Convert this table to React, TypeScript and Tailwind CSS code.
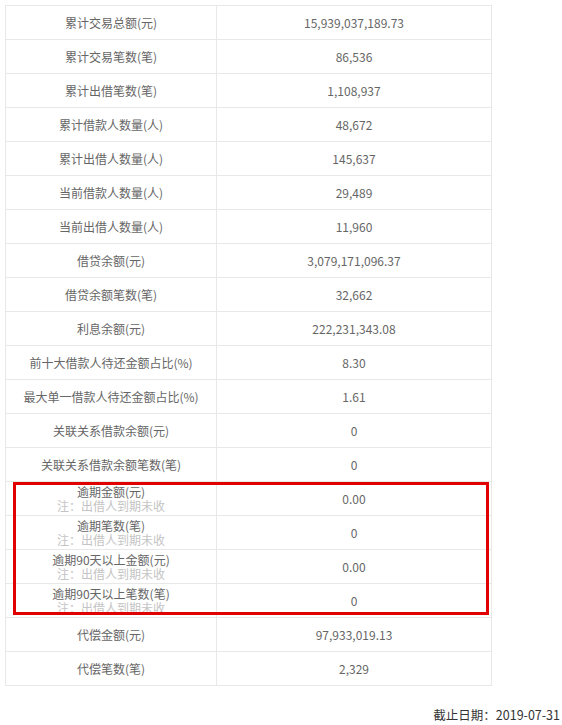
const rows: { label: string; value: string; note?: boolean }[] = [
  { label: '累计交易总额(元)', value: '15,939,037,189.73' },
  { label: '累计交易笔数(笔)', value: '86,536' },
  { label: '累计出借笔数(笔)', value: '1,108,937' },
  { label: '累计借款人数量(人)', value: '48,672' },
  { label: '累计出借人数量(人)', value: '145,637' },
  { label: '当前借款人数量(人)', value: '29,489' },
  { label: '当前出借人数量(人)', value: '11,960' },
  { label: '借贷余额(元)', value: '3,079,171,096.37' },
  { label: '借贷余额笔数(笔)', value: '32,662' },
  { label: '利息余额(元)', value: '222,231,343.08' },
  { label: '前十大借款人待还金额占比(%)', value: '8.30' },
  { label: '最大单一借款人待还金额占比(%)', value: '1.61' },
  { label: '关联关系借款余额(元)', value: '0' },
  { label: '关联关系借款余额笔数(笔)', value: '0' },
  { label: '逾期金额(元)', value: '0.00', note: true },
  { label: '逾期笔数(笔)', value: '0', note: true },
  { label: '逾期90天以上金额(元)', value: '0.00', note: true },
  { label: '逾期90天以上笔数(笔)', value: '0', note: true },
  { label: '代偿金额(元)', value: '97,933,019.13' },
  { label: '代偿笔数(笔)', value: '2,329' },
]

export default function App() {
  return (
    <div
      className="w-[562px] h-[725px] bg-white pt-[5px] pl-[5px] text-[12px] text-[#666]"
      style={{ fontFamily: '"Noto Sans CJK SC", "Noto Sans", sans-serif' }}
    >
      <div className="relative w-[487px]">
        <div className="border-t border-l border-[#e8e8e8]">
          {rows.map((r) => (
            <div key={r.label} className="flex h-[34px] border-b border-[#e8e8e8]">
              <div className="w-[211px] shrink-0 flex flex-col items-center justify-center border-r border-[#e8e8e8] leading-[14px]">
                <span>{r.label}</span>
                {r.note && <span className="text-[#c4c4c4]">注：出借人到期未收</span>}
              </div>
              <div className="flex-1 flex items-center justify-center border-r border-[#e8e8e8]">
                {r.value}
              </div>
            </div>
          ))}
        </div>
        {/* highlight box over the overdue rows */}
        <div className="absolute left-[8px] top-[477px] w-[476px] h-[133px] border-[3px] border-[#e00000]" />
      </div>
      <div className="mt-[20px] pr-[2px] text-right text-[12.5px] text-[#333]">截止日期：2019-07-31</div>
    </div>
  )
}
